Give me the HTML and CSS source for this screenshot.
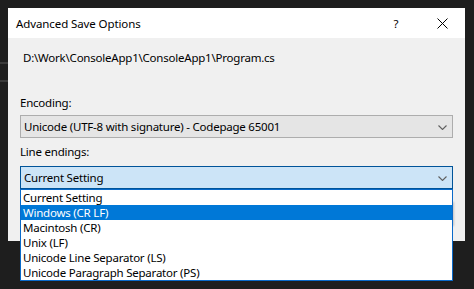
FILE: index.html
```html
<!DOCTYPE html>
<html lang="en">
<head>
    <meta charset="UTF-8">
    <title>Advanced Save Options</title>
    <link rel="stylesheet" href="styles.css">
</head>
<body>
    <div class="dialog">
        <div class="titlebar">
            <span class="title">Advanced Save Options</span>
            <div class="caption-buttons">
                <span class="cap-btn">?</span>
                <span class="cap-btn">
                    <svg width="11" height="11" viewBox="0 0 11 11"><path d="M0.5 0.5 L10.5 10.5 M10.5 0.5 L0.5 10.5" stroke="#000" stroke-width="1" fill="none"/></svg>
                </span>
            </div>
        </div>
        <div class="content">
            <div class="path">D:\Work\ConsoleApp1\ConsoleApp1\Program.cs</div>

            <label class="field-label enc-label">Encoding:</label>
            <div class="combo">
                <span>Unicode (UTF-8 with signature) - Codepage 65001</span>
                <svg class="chevron" width="9" height="5" viewBox="0 0 9 5"><path d="M0.5 0.5 L4.5 4.5 L8.5 0.5" stroke="#606060" stroke-width="1.1" fill="none"/></svg>
            </div>

            <label class="field-label le-label">Line endings:</label>
            <div class="combo-wrap">
                <div class="combo open">
                    <span>Current Setting</span>
                    <svg class="chevron" width="9" height="5" viewBox="0 0 9 5"><path d="M0.5 0.5 L4.5 4.5 L8.5 0.5" stroke="#606060" stroke-width="1.1" fill="none"/></svg>
                </div>
                <ul class="dropdown">
                    <li>Current Setting</li>
                    <li class="selected">Windows (CR LF)</li>
                    <li>Macintosh (CR)</li>
                    <li>Unix (LF)</li>
                    <li>Unicode Line Separator (LS)</li>
                    <li>Unicode Paragraph Separator (PS)</li>
                </ul>
            </div>

            <div class="buttons">
                <button>OK</button>
                <button>Cancel</button>
            </div>
        </div>
    </div>
</body>
</html>
```

FILE: styles.css
```css
body {
    margin: 0;
    padding: 8px 9px 0 8px;
    background-color: #1e1e1e;
    background-image:
        linear-gradient(#3a3a3a, #3a3a3a),
        linear-gradient(#3a3a3a, #3a3a3a);
    background-size: 8px 2px, 8px 2px;
    background-position: 0 62px, 0 80px;
    background-repeat: no-repeat;
    font-family: "Noto Sans", sans-serif;
    font-size: 11.5px;
    color: #000;
    height: 289px;
    box-sizing: border-box;
    overflow: hidden;
}
.dialog {
    width: 457px;
    height: 233px;
    background: #f0f0f0;
    display: flex;
    flex-direction: column;
}
.titlebar {
    height: 30px;
    background: #fff;
    display: flex;
    align-items: center;
    justify-content: space-between;
}
.title {
    padding-left: 8px;
    line-height: 16px;
    padding-top: 1px;
    letter-spacing: -0.1px;
}
.caption-buttons {
    display: flex;
    height: 100%;
}
.cap-btn {
    width: 46px;
    display: flex;
    align-items: center;
    justify-content: center;
    padding-top: 1px;
}
.content {
    padding: 12px 11px 0 12px;
    display: flex;
    flex-direction: column;
    letter-spacing: -0.22px;
}
.path {
    line-height: 16px;
    padding-left: 3px;
}
.field-label {
    line-height: 16px;
}
.enc-label {
    margin-top: 29px;
    margin-bottom: 4px;
}
.le-label {
    margin-top: 6px;
    margin-bottom: 6px;
}
.combo {
    width: 433px;
    height: 23px;
    box-sizing: border-box;
    border: 1px solid #adadad;
    background: #e5e5e5;
    display: flex;
    align-items: center;
    justify-content: space-between;
    padding: 0 5px 0 3px;
    line-height: 21px;
}
.combo.open {
    background: #cce4f7;
    border-color: #005499;
}
.chevron {
    margin-top: 1px;
}
.combo-wrap {
    position: relative;
}
.dropdown {
    position: absolute;
    top: 23px;
    left: 0;
    width: 433px;
    box-sizing: border-box;
    margin: 0;
    padding: 0;
    list-style: none;
    background: #fff;
    border: 1px solid #0a6ac9;
    z-index: 2;
}
.dropdown li {
    line-height: 15px;
    height: 15px;
    padding-left: 2px;
}
.dropdown li.selected {
    background: #0078d7;
    color: #fff;
}
.buttons {
    margin-top: 13px;
    display: flex;
    justify-content: flex-end;
    gap: 8px;
    padding-right: 1px;
}
.buttons button {
    width: 75px;
    height: 24px;
    font-family: inherit;
    font-size: 12px;
    background: #e1e1e1;
    border: 1px solid #adadad;
    box-shadow: 1px 0 2px rgba(0, 0, 0, 0.2);
}
```
